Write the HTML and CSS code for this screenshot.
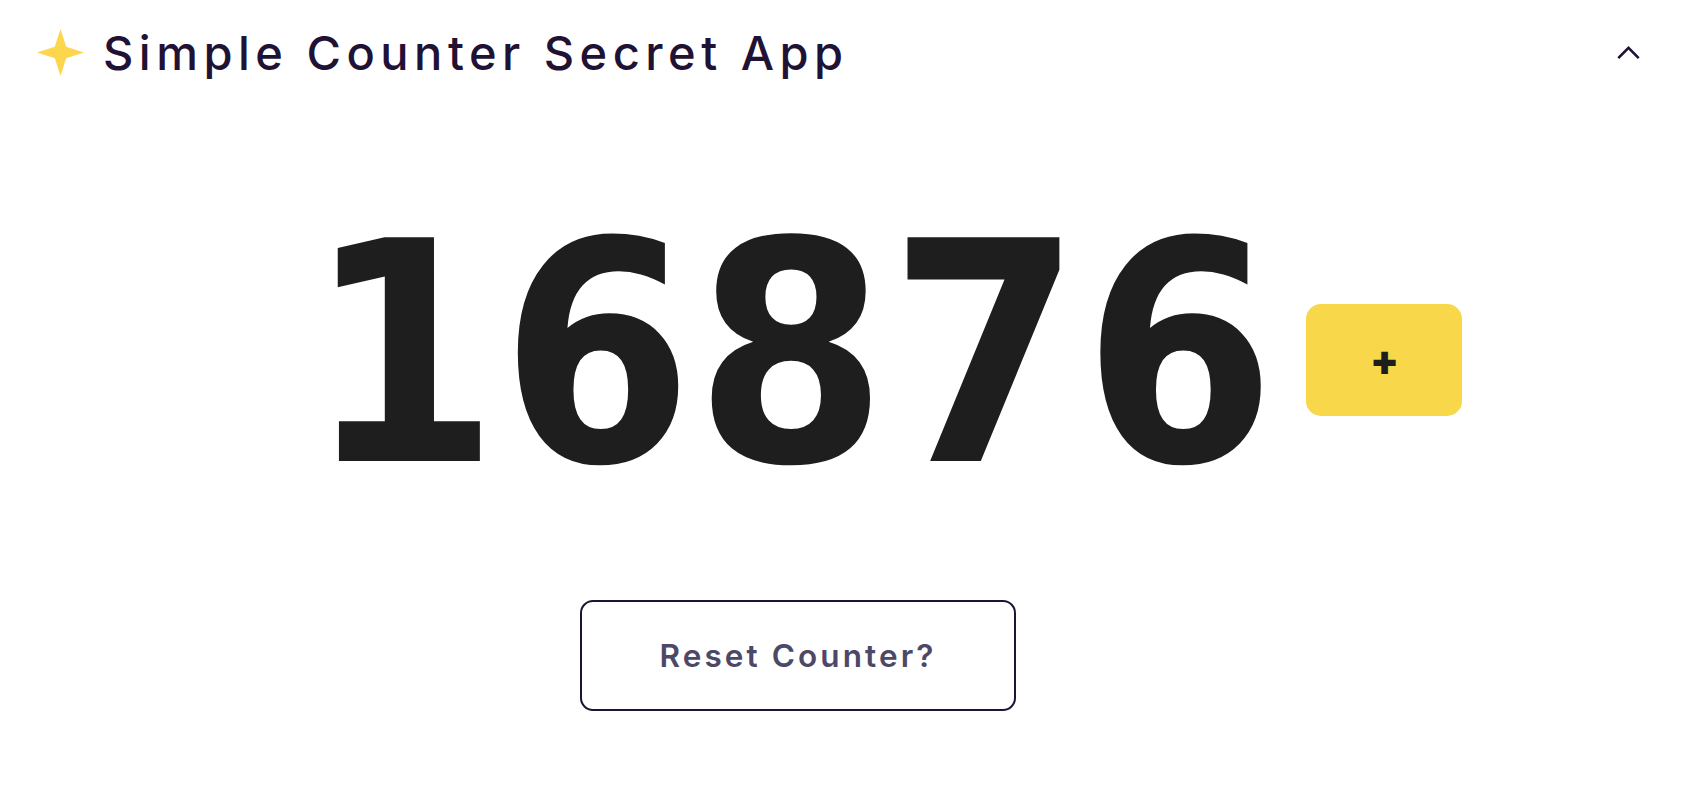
FILE: index.html
```html
<!DOCTYPE html>
<html lang="en">
<head>
<meta charset="utf-8">
<title>Simple Counter Secret App</title>
<link rel="stylesheet" href="styles.css">
</head>
<body>
<header class="topbar">
  <div class="brand">
    <svg class="star" viewBox="0 0 48 48" width="47" height="47" aria-hidden="true">
      <path d="M24 0 L29.8 18.2 L48 24 L29.8 29.8 L24 48 L18.2 29.8 L0 24 L18.2 18.2 Z" fill="#fdd64d"/>
    </svg>
    <h1 class="title">Simple Counter Secret App</h1>
  </div>
  <button class="collapse" aria-label="Collapse">
    <svg viewBox="0 0 24 14" width="23" height="13" aria-hidden="true">
      <path d="M2 12 L12 2 L22 12" fill="none" stroke="#1f1235" stroke-width="2.8" stroke-linecap="square"/>
    </svg>
  </button>
</header>
<main class="main">
  <div class="counter-row">
    <div class="count">16876</div>
    <button class="plus" aria-label="Increment">+</button>
  </div>
  <button class="reset">Reset Counter?</button>
</main>
</body>
</html>
```
FILE: styles.css
```css
* { box-sizing: border-box; }
html, body { margin: 0; padding: 0; background: #ffffff; }
body {
  font-family: Inter, "Noto Sans", sans-serif;
  color: #1f1235;
}
.topbar {
  display: flex;
  align-items: flex-start;
  justify-content: space-between;
  padding: 29px 46px 0 37px;
  height: 104px;
}
.brand {
  display: flex;
  align-items: center;
  gap: 19px;
}
.star { display: block; }
.title {
  margin: 0;
  font-size: 47px;
  font-weight: 500;
  letter-spacing: 5.5px;
  line-height: 47px;
  color: #1f1235;
}
.collapse {
  border: 0;
  background: none;
  padding: 0;
  margin-top: 17px;
  cursor: pointer;
}
.collapse svg { display: block; }
.main {
  display: flex;
  flex-direction: column;
  align-items: center;
  padding-right: 90px;
}
.counter-row {
  display: grid;
  grid-template-columns: 1fr auto 1fr;
  align-items: center;
  width: 100%;
  margin-top: 71px;
}
.count {
  grid-column: 2;
  font-family: "DejaVu Sans Condensed", "DejaVu Sans", sans-serif;
  font-stretch: condensed;
  font-weight: 700;
  font-size: 307px;
  letter-spacing: 2px;
  line-height: 360px;
  color: #1e1e1e;
  margin-right: 12px;
}
.plus {
  grid-column: 3;
  justify-self: start;
  margin-left: 17px;
  margin-top: 10px;
  width: 156px;
  height: 112px;
  border: 0;
  border-radius: 15px;
  background: #f8d84a;
  color: #1e1e1e;
  font-family: Inter, sans-serif;
  font-weight: 900;
  font-size: 42px;
  line-height: 1;
  cursor: pointer;
}
.reset {
  margin-top: 65px;
  width: 436px;
  height: 111px;
  border: 2px solid #1f1235;
  border-radius: 13px;
  background: #fff;
  color: #4d4868;
  font-family: Inter, sans-serif;
  font-weight: 600;
  font-size: 31.5px;
  letter-spacing: 3.1px;
  cursor: pointer;
}
```
